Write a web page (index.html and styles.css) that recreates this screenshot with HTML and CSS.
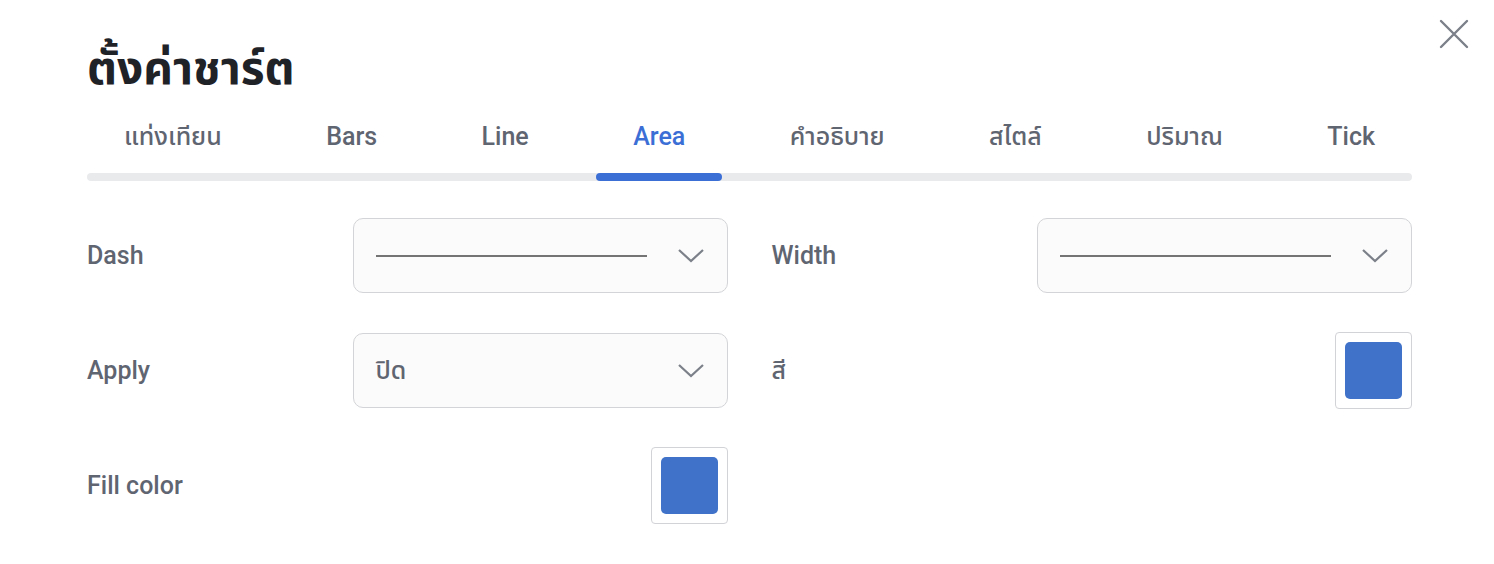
FILE: index.html
```html
<!DOCTYPE html>
<html lang="th">
<head>
<meta charset="utf-8">
<title>ตั้งค่าชาร์ต</title>
<link rel="stylesheet" href="styles.css">
</head>
<body>
<div class="dialog">
  <button class="close" aria-label="close">
    <svg width="32" height="32" viewBox="0 0 32 32"><path d="M3 3 L29 29 M29 3 L3 29" stroke="#7b8089" stroke-width="2.4" fill="none" stroke-linecap="round"/></svg>
  </button>
  <h1 class="title">ตั้งค่าชาร์ต</h1>
  <div class="tabs">
    <div class="tab">แท่งเทียน</div>
    <div class="tab">Bars</div>
    <div class="tab">Line</div>
    <div class="tab active">Area</div>
    <div class="tab">คำอธิบาย</div>
    <div class="tab">สไตล์</div>
    <div class="tab">ปริมาณ</div>
    <div class="tab">Tick</div>
  </div>
  <div class="form">
    <div class="field">
      <div class="label">Dash</div>
      <div class="select">
        <span class="line"></span>
        <svg class="chev" width="28" height="16" viewBox="0 0 28 16"><path d="M2 2 L14 13 L26 2" stroke="#7b8089" stroke-width="2.2" fill="none"/></svg>
      </div>
    </div>
    <div class="field">
      <div class="label">Width</div>
      <div class="select">
        <span class="line"></span>
        <svg class="chev" width="28" height="16" viewBox="0 0 28 16"><path d="M2 2 L14 13 L26 2" stroke="#7b8089" stroke-width="2.2" fill="none"/></svg>
      </div>
    </div>
    <div class="field">
      <div class="label">Apply</div>
      <div class="select">
        <span class="value">ปิด</span>
        <svg class="chev" width="28" height="16" viewBox="0 0 28 16"><path d="M2 2 L14 13 L26 2" stroke="#7b8089" stroke-width="2.2" fill="none"/></svg>
      </div>
    </div>
    <div class="field">
      <div class="label">สี</div>
      <div class="swatch"><span class="chip"></span></div>
    </div>
    <div class="field">
      <div class="label">Fill color</div>
      <div class="swatch"><span class="chip"></span></div>
    </div>
  </div>
</div>
</body>
</html>
```

FILE: styles.css
```css
* { box-sizing: border-box; }
html, body { margin: 0; background: #ffffff; }
body {
  font-family: Roboto, "Noto Sans Thai", "Noto Sans Thai Looped", "Noto Sans", sans-serif;
  color: #5f6571;
}
.dialog {
  position: relative;
  width: 1494px;
  height: 564px;
  padding: 36px 82px 0 87px;
}
.close {
  position: absolute;
  top: 18px;
  right: 24px;
  width: 32px;
  height: 32px;
  padding: 0;
  border: 0;
  background: none;
}
.close svg { display: block; }
.title {
  margin: 0;
  font-size: 46px;
  line-height: 64px;
  font-weight: 700;
  color: #1f2328;
}
.tabs {
  position: relative;
  display: flex;
  justify-content: space-between;
  margin-top: 17px;
}
.tabs::before {
  content: "";
  position: absolute;
  left: 0;
  right: 0;
  bottom: 0;
  height: 8px;
  border-radius: 4px;
  background: #e9eaec;
}
.tab {
  position: relative;
  padding: 3px 37px 19px;
  font-size: 25px;
  line-height: 34px;
  font-weight: 500;
  color: #5f6571;
  border-bottom: 8px solid transparent;
  white-space: nowrap;
}
.tab.active { color: #3c6fd6; }
.tab.active::after {
  content: "";
  position: absolute;
  left: 0;
  right: 0;
  bottom: -8px;
  height: 8px;
  border-radius: 4px;
  background: #3c6fd6;
}
.form {
  display: grid;
  grid-template-columns: 1fr 1fr;
  column-gap: 44px;
  row-gap: 40px;
  margin-top: 37px;
}
.field {
  display: flex;
  align-items: center;
  justify-content: space-between;
  height: 75px;
}
.label {
  font-size: 25px;
  font-weight: 500;
  color: #5f6571;
}
.select {
  display: flex;
  align-items: center;
  justify-content: space-between;
  width: 375px;
  height: 75px;
  padding: 0 22px 0 22px;
  border: 1px solid #d3d4d7;
  border-radius: 10px;
  background: #fbfbfb;
}
.line {
  display: block;
  width: 271px;
  height: 2px;
  background: #747474;
}
.value {
  font-size: 25px;
  font-weight: 500;
  color: #5f6571;
}
.chev { display: block; }
.swatch {
  width: 77px;
  height: 77px;
  padding: 9px;
  border: 1px solid #d2d3d7;
  border-radius: 4px;
  background: #fff;
}
.chip {
  display: block;
  width: 100%;
  height: 100%;
  border-radius: 5px;
  background: #3f72c8;
}
```
